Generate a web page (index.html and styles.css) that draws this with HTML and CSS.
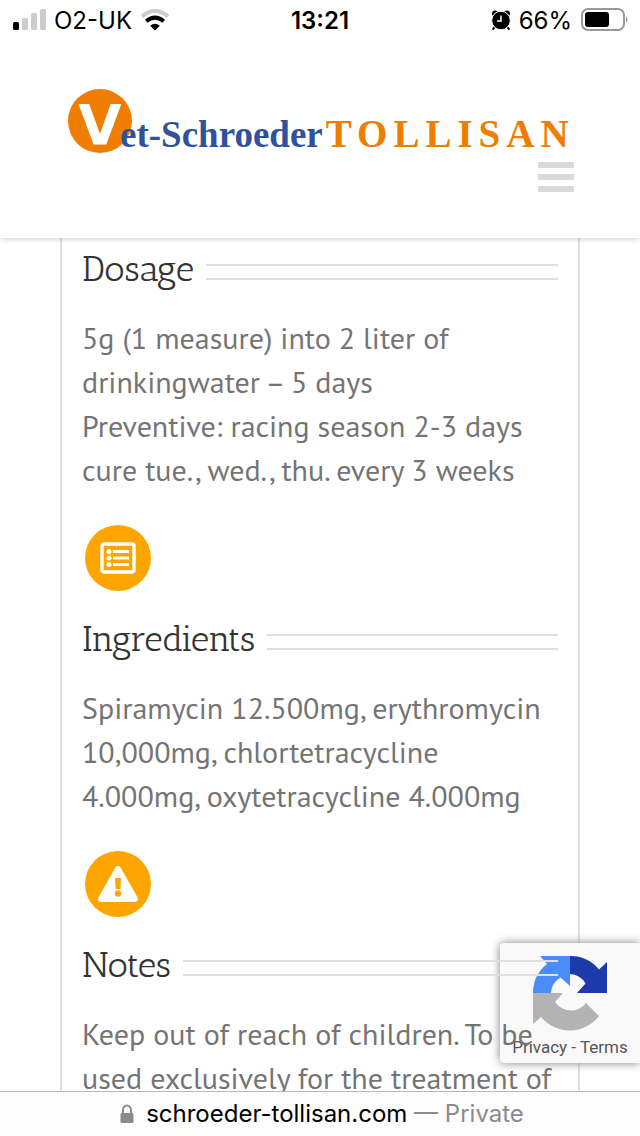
FILE: index.html
```html
<!DOCTYPE html>
<html lang="en">
<head>
  <meta charset="UTF-8">
  <meta name="viewport" content="width=device-width, initial-scale=1.0">
  <title>Vet-Schroeder TOLLISAN</title>
  <link rel="stylesheet" href="styles.css">
</head>
<body>

<!-- Phone status bar -->
<div class="status-bar">
  <div class="status-left">
    <svg width="34" height="22" viewBox="0 0 34 22" aria-hidden="true">
      <rect x="1" y="13" width="6" height="8" rx="1.5" fill="#000"/>
      <rect x="10" y="9" width="6" height="12" rx="1.5" fill="#ccc"/>
      <rect x="19" y="4" width="6" height="17" rx="1.5" fill="#ccc"/>
      <rect x="28" y="0" width="6" height="21" rx="1.5" fill="#ccc"/>
    </svg>
    <span>O2-UK</span>
    <svg width="30" height="22" viewBox="0 0 30 22" aria-hidden="true">
      <path d="M2 7.5Q15 -3.5 28 7.5" fill="none" stroke="#ccc" stroke-width="4"/>
      <path d="M6.3 12.3Q15 5 23.7 12.3" fill="none" stroke="#000" stroke-width="4"/>
      <path d="M10.2 16.7Q15 13 19.8 16.7L15 21.5Z" fill="#000"/>
    </svg>
  </div>
  <strong class="status-time">13:21</strong>
  <div class="status-right">
    <svg width="20" height="20" viewBox="0 0 20 20" aria-hidden="true">
      <circle cx="4" cy="3.5" r="3" fill="#000"/>
      <circle cx="16" cy="3.5" r="3" fill="#000"/>
      <path d="M4 16.5L2.2 19M16 16.5l1.8 2.5" stroke="#000" stroke-width="2" stroke-linecap="round"/>
      <circle cx="10" cy="10.5" r="9.3" fill="#000" stroke="#fff"/>
      <path d="M10 5.5v5.5H6" fill="none" stroke="#fff" stroke-width="1.5"/>
    </svg>
    <span>66%</span>
    <svg width="48" height="24" viewBox="0 0 48 24" aria-hidden="true">
      <rect x="2" y="1" width="42" height="21" rx="6" fill="none" stroke="#999" stroke-width="2"/>
      <rect x="5" y="4" width="24" height="15" rx="3" fill="#000"/>
      <path d="M46 8q3 3.5 0 7z" fill="#999"/>
    </svg>
  </div>
</div>

<header class="site-header">
  <a class="logo" href="#">
    <span class="logo-mark">V</span><span class="logo-name">et-Schroeder</span><span class="logo-brand">TOLLISAN</span>
  </a>
  <button class="menu-toggle" type="button" aria-label="Menu">
    <span></span>
    <span></span>
    <span></span>
  </button>
</header>

<main>
  <div class="product-box">
    <section>
      <h2>Dosage</h2>
      <p>5g (1 measure) into 2 liter of<br>drinkingwater – 5 days<br>Preventive: racing season 2-3 days<br>cure tue., wed., thu. every 3 weeks</p>
    </section>

    <section>
      <div class="section-icon">
        <svg width="36" height="32" viewBox="0 0 36 32" aria-hidden="true">
          <rect x="2" y="2" width="32" height="28" rx="2" fill="none" stroke="#fff" stroke-width="3.4"/>
          <circle cx="9" cy="9.5" r="2.5" fill="#fff"/>
          <circle cx="9" cy="16" r="2.5" fill="#fff"/>
          <circle cx="9" cy="22.5" r="2.5" fill="#fff"/>
          <path d="M13 9.5h16M13 16h16M13 22.5h16" stroke="#fff" stroke-width="3.2"/>
        </svg>
      </div>
      <h2>Ingredients</h2>
      <p>Spiramycin 12.500mg, erythromycin<br>10,000mg, chlortetracycline<br>4.000mg, oxytetracycline 4.000mg</p>
    </section>

    <section>
      <div class="section-icon">
        <svg width="40" height="36" viewBox="0 0 40 36" aria-hidden="true">
          <path d="M20 3L37 33H3Z" fill="#fff" stroke="#fff" stroke-width="6" stroke-linejoin="round"/>
          <path d="M17 12h6l-.6 11h-4.8z" fill="#ffa500"/>
          <circle cx="20" cy="27.5" r="3.2" fill="#ffa500"/>
        </svg>
      </div>
      <h2>Notes</h2>
      <p>Keep out of reach of children. To be<br>used exclusively for the treatment of</p>
    </section>
  </div>

  <!-- reCAPTCHA badge -->
  <aside class="captcha-badge">
    <svg width="76" height="76" viewBox="0 0 76 76" aria-hidden="true">
      <path d="M38 1A37 37 0 0 1 67 14.5L75 7V38H45L53.5 28.5A19 19 0 0 0 38 19Z" fill="#1c3aa9"/>
      <path d="M38 1H8L15 9A37 37 0 0 0 1 38H19A19 19 0 0 1 28.5 22.5L38 31Z" fill="#4b8df8"/>
      <path d="M1 38H31L23 47A19 19 0 0 0 54 48L67 61A37 37 0 0 1 9 62L1 69Z" fill="#b3b3b3"/>
    </svg>
    <div class="captcha-links"><a href="#">Privacy</a> - <a href="#">Terms</a></div>
  </aside>
</main>

<footer class="address-bar">
  <svg width="14" height="20" viewBox="0 0 14 20" aria-hidden="true">
    <path d="M3 10V6a4 4.5 0 0 1 8 0v4" fill="none" stroke="#8a8a8f" stroke-width="2"/>
    <rect x="0.5" y="9" width="13" height="10" rx="1.5" fill="#8a8a8f"/>
  </svg>
  <div>schroeder-tollisan.com <span class="private">— Private</span></div>
</footer>

</body>
</html>
```
FILE: styles.css
```css
* {
  box-sizing: border-box;
}
body {
  margin: 0;
  height: 100vh;
  display: flex;
  flex-direction: column;
  overflow: hidden;
  background-color: #fff;
  font-family: "PT Sans", "Noto Sans", sans-serif;
  color: #747474;
}
h2, p {
  margin: 0;
}
a {
  color: inherit;
  text-decoration: none;
}
.status-bar {
  position: relative;
  z-index: 4;
  display: grid;
  grid-template-columns: 1fr auto 1fr;
  align-items: center;
  height: 40px;
  padding: 0 12px;
  background-color: #fff;
  color: #000;
  font-family: Inter, sans-serif;
  font-size: 24px;
}
.status-left, .status-right {
  display: flex;
  align-items: center;
  gap: 8px;
}
.status-right {
  justify-content: flex-end;
}
.status-time {
  font-weight: 600;
}
.site-header {
  position: relative;
  z-index: 3;
  display: flex;
  flex-direction: column;
  height: 198px;
  padding: 49px 66px 0 68px;
  background-color: #fff;
  box-shadow: 0 1px 6px rgba(0, 0, 0, 0.2);
}
.logo {
  display: flex;
  align-items: baseline;
  height: 64px;
  font-family: "Liberation Serif", serif;
  font-weight: bold;
  font-size: 37px;
  line-height: 66px;
  white-space: nowrap;
}
.logo-mark {
  align-self: flex-start;
  flex: none;
  width: 64px;
  height: 64px;
  margin-right: -12px;
  border-radius: 50%;
  background-color: #ef7d00;
  color: #fff;
  font-family: "DejaVu Sans", sans-serif;
  font-size: 56px;
  line-height: 72px;
  text-align: center;
}
.logo-name, .logo-brand {
  padding-top: 12px;
}
.logo-name {
  color: #30519c;
}
.logo-brand {
  margin-left: 3px;
  color: #ef7d00;
  font-size: 39px;
  letter-spacing: 6px;
}
.menu-toggle {
  align-self: flex-end;
  display: flex;
  flex-direction: column;
  gap: 6px;
  width: 36px;
  margin-top: 9px;
  padding: 0;
  border: none;
  background: none;
  cursor: pointer;
}
.menu-toggle span {
  height: 6px;
  border-radius: 1px;
  background-color: #dadada;
}
main {
  position: relative;
  flex: 1;
  min-height: 0;
  padding: 0 60px;
}
.product-box {
  height: 100%;
  padding: 9px 20px 0;
  border: solid #e0dede;
  border-width: 0 2px;
}
/* section text stays above the badge */
section {
  position: relative;
  z-index: 2;
}
h2 {
  display: flex;
  gap: 12px;
  height: 50px;
  margin-bottom: 19px;
  color: #333;
  font-family: "Antic Slab", "DejaVu Serif Condensed", "DejaVu Serif", serif;
  font-weight: normal;
  font-size: 36px;
  line-height: 44px;
}
h2::after {
  content: "";
  flex: 1;
  height: 12px;
  margin-top: 17px;
  border: solid #e0dede;
  border-width: 2px 0;
}
p {
  font-size: 30px;
  line-height: 44px;
  white-space: nowrap;
}
.section-icon {
  display: flex;
  align-items: center;
  justify-content: center;
  width: 66px;
  height: 66px;
  margin: 33px 3px 26px;
  border-radius: 50%;
  background-color: #ffa500;
}
.captcha-badge {
  position: absolute;
  z-index: 1;
  right: 0;
  bottom: 28px;
  width: 140px;
  height: 120px;
  padding-top: 12px;
  border-radius: 4px 0 0 4px;
  background-color: #f9f9f9;
  box-shadow: 0 0 10px #808080;
  text-align: center;
}
.captcha-badge svg {
  display: block;
  margin: 0 auto;
}
.captcha-links {
  color: #555;
  font-family: Roboto, sans-serif;
  font-size: 17px;
  line-height: 32px;
}
.address-bar {
  position: relative;
  z-index: 3;
  display: flex;
  align-items: center;
  justify-content: center;
  gap: 12px;
  height: 45px;
  padding-left: 4px;
  border-top: 1px solid #b8b8b8;
  background-color: #fdfdfd;
  color: #000;
  font-family: Inter, sans-serif;
  font-size: 24px;
  line-height: 28px;
}
.private {
  color: #8a8a8f;
}
```
